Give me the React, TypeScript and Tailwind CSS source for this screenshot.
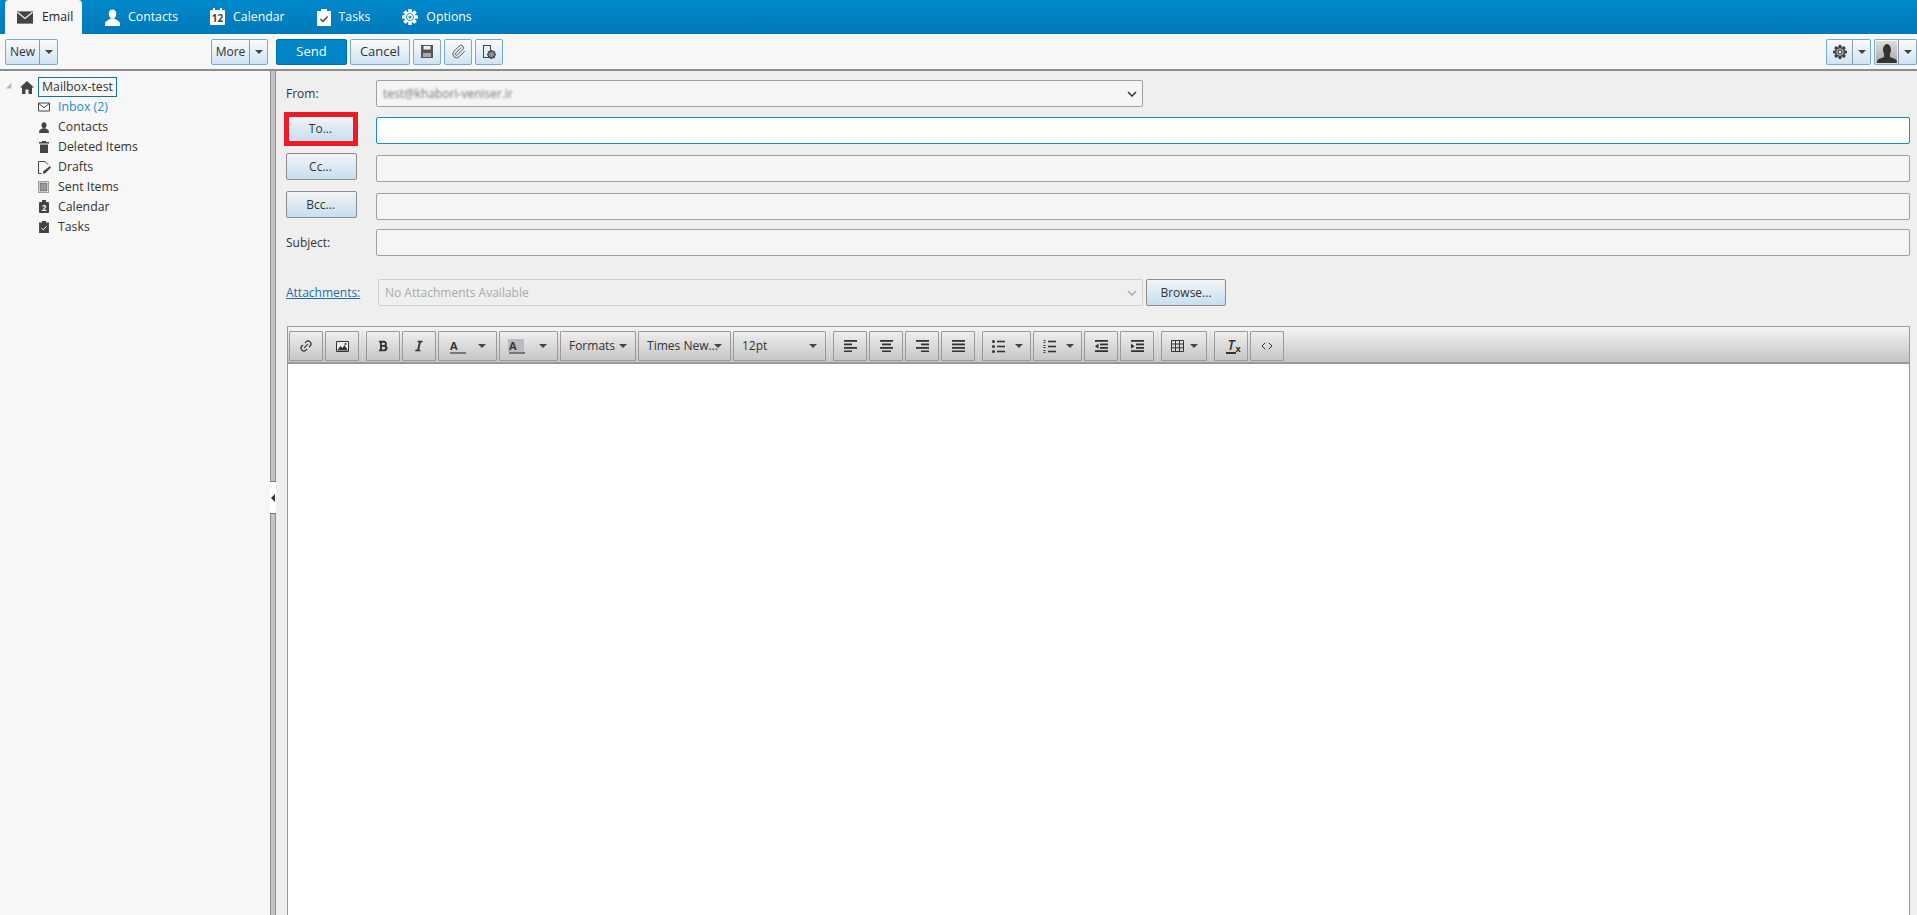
import React from 'react';
import { Code, Link2, Paperclip } from 'lucide-react';
import { FaBold, FaItalic } from 'react-icons/fa';

const Caret: React.FC<{ className?: string }> = ({ className = 'border-t-[#444]' }) => (
  <span className={`inline-block h-0 w-0 border-x-[4px] border-t-[4px] border-x-transparent ${className}`} />
);

const GearIcon: React.FC<{ className?: string }> = ({ className }) => (
  <svg viewBox="0 0 16 16" className={className}>
    {[0, 45, 90, 135].map((a) => (
      <rect key={a} x="6.2" y="0" width="3.6" height="16" rx=".6" fill="currentColor" transform={`rotate(${a} 8 8)`} />
    ))}
    <circle cx="8" cy="8" r="5.6" fill="currentColor" />
    <circle cx="8" cy="8" r="3.6" fill="none" stroke="#fff" strokeWidth="1" opacity=".85" />
    <circle cx="8" cy="8" r="1.6" fill="#fff" opacity=".85" />
  </svg>
);

const PersonIcon: React.FC<{ className?: string }> = ({ className }) => (
  <svg viewBox="0 0 15 17" className={className}>
    <ellipse cx="7.5" cy="5" rx="3.8" ry="4.6" fill="currentColor" />
    <path d="M5.5 9.5h4L14 12.5c.7.5 1 1 1 2V17H0v-2.5c0-1 .3-1.5 1-2z" fill="currentColor" />
  </svg>
);

const EnvelopeIcon: React.FC<{ className?: string }> = ({ className }) => (
  <svg viewBox="0 0 17 13" className={className}>
    <path d="M0 0h17v13H0z" fill="currentColor" />
    <path d="M.5 1l8 6.5 8-6.5" fill="none" stroke="#f7f7f7" strokeWidth="1.3" />
  </svg>
);

const CalendarIcon: React.FC<{ label: string; className: string; text: string }> = ({ label, className, text }) => (
  <span className={`relative flex flex-col items-center justify-end rounded-[1px] ${className}`}>
    <span className="absolute -top-[2px] left-[3px] h-[4px] w-[2px] bg-inherit" />
    <span className="absolute -top-[2px] right-[3px] h-[4px] w-[2px] bg-inherit" />
    <span className={`font-bold ${text}`}>{label}</span>
  </span>
);

const ClipboardIcon: React.FC<{ className?: string; stroke: string }> = ({ className, stroke }) => (
  <svg viewBox="0 0 14 17" className={className}>
    <path d="M0 2h4V0h6v2h4v15H0z" fill="currentColor" />
    <path d="M3.5 10l2.5 2.5 4.5-5" fill="none" stroke={stroke} strokeWidth="1.4" />
  </svg>
);

const NavTab: React.FC<{ icon: React.ReactNode; label: string; active?: boolean }> = ({ icon, label, active }) =>
  active ? (
    <div className="ml-[5px] flex h-[34px] w-[77px] items-center gap-[9px] rounded-t-[4px] bg-[#f7f7f7] pl-[12px] text-[#222]">
      {icon}
      <span>{label}</span>
    </div>
  ) : (
    <div className="flex h-[34px] items-center gap-[8px] text-white">
      {icon}
      <span>{label}</span>
    </div>
  );

const SplitButton: React.FC<{ label?: React.ReactNode; main: string; arrow: string }> = ({ label, main, arrow }) => (
  <div className="flex h-[26px] overflow-hidden rounded-[2px] border border-[#7aa9d4] bg-gradient-to-b from-[#fbfbfb] to-[#cfe3f3] text-[#333]">
    <div className={`flex items-center justify-center border-r border-[#8a9aa8] ${main}`}>{label}</div>
    <div className={`flex items-center justify-center ${arrow}`}>
      <Caret />
    </div>
  </div>
);

const IconButton: React.FC<{ children: React.ReactNode }> = ({ children }) => (
  <div className="flex h-[26px] w-[28px] items-center justify-center rounded-[2px] border border-[#7aa9d4] bg-gradient-to-b from-[#fbfbfb] to-[#cfe3f3] text-[#444]">
    {children}
  </div>
);

const AddressButton: React.FC<{ label: string; marked?: boolean }> = ({ label, marked }) => (
  <div className="relative mt-px flex h-[27px] w-[71px] items-center justify-center rounded-[2px] border border-[#8c8c8c] bg-gradient-to-b from-[#f3f3f3] to-[#c6dff1] pr-[2px] text-[#333]">
    {label}
    {marked && <span className="absolute -top-[4px] -bottom-[5px] -left-[3px] -right-[2px] border-[5px] border-[#ed1c24]" />}
  </div>
);

const AddressRow: React.FC<{ label: string; marked?: boolean; focused?: boolean; className: string }> = ({
  label,
  marked,
  focused,
  className,
}) => (
  <div className={`flex items-start ${className}`}>
    <div className="w-[90px]">
      <AddressButton label={label} marked={marked} />
    </div>
    <div
      className={
        focused
          ? 'mt-[3px] h-[27px] flex-1 rounded-[2px] border border-[#1a8fc4] bg-white'
          : 'mt-[3px] h-[27px] flex-1 rounded-[2px] border border-[#a0a0a0] bg-[#f5f5f5]'
      }
    />
  </div>
);

const EdBtn: React.FC<{ className?: string; children?: React.ReactNode }> = ({ className = 'w-[34px] justify-center', children }) => (
  <div className={`flex h-[30px] shrink-0 items-center rounded-[1px] border border-[#9a9a9a] text-[#333] ${className}`}>{children}</div>
);

const Sep = () => <div className="mx-px h-[30px] w-px bg-[#d8d8d8]" />;

const Lines: React.FC<{ kind: 'left' | 'center' | 'right' | 'justify' }> = ({ kind }) => {
  const rows = {
    left: [[0, 13], [0, 8], [0, 13], [0, 8]],
    center: [[0, 13], [2, 9], [0, 13], [2, 9]],
    right: [[0, 13], [5, 8], [0, 13], [5, 8]],
    justify: [[0, 13], [0, 13], [0, 13], [0, 13]],
  }[kind];
  return (
    <svg width="13" height="12" viewBox="0 0 13 12" className="text-[#333]">
      {rows.map(([x, w], i) => (
        <rect key={i} x={x} y={i * 3.5} width={w} height="1.8" fill="currentColor" />
      ))}
    </svg>
  );
};

const Indent: React.FC<{ out?: boolean }> = ({ out }) => (
  <svg width="13" height="12" viewBox="0 0 13 12" className="text-[#333]">
    <rect x="0" y="0" width="13" height="1.8" fill="currentColor" />
    <rect x="5" y="3.5" width="8" height="1.8" fill="currentColor" />
    <rect x="5" y="7" width="8" height="1.8" fill="currentColor" />
    <rect x="0" y="10.2" width="13" height="1.8" fill="currentColor" />
    <path d={out ? 'M0 6.2L3.5 3.6v5.2z' : 'M3.5 6.2L0 3.6v5.2z'} fill="currentColor" />
  </svg>
);

const BulletList = () => (
  <svg width="13" height="13" viewBox="0 0 13 13" className="text-[#333]">
    {[1.5, 6.5, 11.5].map((y) => (
      <g key={y}>
        <circle cx="1.5" cy={y} r="1.5" fill="currentColor" />
        <rect x="5" y={y - 0.8} width="8" height="1.6" fill="currentColor" />
      </g>
    ))}
  </svg>
);

const NumberList = () => (
  <svg width="13" height="13" viewBox="0 0 13 13" className="text-[#333]">
    {[1.5, 6.5, 11.5].map((y) => (
      <g key={y}>
        <rect x="0.5" y={y - 1.5} width="2" height="1" fill="currentColor" />
        <rect x="0.5" y={y + 0.5} width="2" height="1" fill="currentColor" />
        <rect x="5" y={y - 0.8} width="8" height="1.6" fill="currentColor" />
      </g>
    ))}
  </svg>
);

const TableIcon = () => (
  <svg width="13" height="12" viewBox="0 0 13 12" className="text-[#333]">
    <path d="M.5.5h12v11H.5zM4.5.5v11M8.5.5v11M.5 4h12M.5 7.8h12" fill="none" stroke="currentColor" />
  </svg>
);

const ImageIcon = () => (
  <svg width="13" height="11" viewBox="0 0 13 11" className="text-[#333]">
    <path d="M.5.5h12v10H.5z" fill="#eee" stroke="currentColor" />
    <path d="M1 9.5l3.5-4.5 2 2 2-3 3.500 5.500z" fill="currentColor" />
    <circle cx="9.5" cy="3" r="1" fill="currentColor" />
  </svg>
);

const ColorIcon: React.FC<{ bg?: boolean }> = ({ bg }) => (
  <span className="flex w-[16px] flex-col items-start">
    <span className={bg ? 'w-[16px] bg-[#bbb] pl-px text-[11px] leading-[13px] font-bold' : 'pl-px text-[11px] leading-[13px] font-bold'}>A</span>
    <span className="ml-px h-[2px] w-[16px] bg-[#777]" />
  </span>
);

const folders: { label: string; icon: React.ReactNode; className?: string }[] = [
  {
    label: 'Inbox (2)',
    icon: (
      <svg viewBox="0 0 12 9" className="h-[10px] w-[12px]">
        <path d="M.5.5h11v8H.5zM.5.8L6 5.2 11.5.8" fill="none" stroke="#444" />
      </svg>
    ),
    className: 'text-[#1a8ccb]',
  },
  { label: 'Contacts', icon: <PersonIcon className="ml-px h-[11px] w-[10px]" /> },
  {
    label: 'Deleted Items',
    icon: (
      <svg viewBox="0 0 10 12" className="ml-px h-[12px] w-[10px]">
        <path d="M3 0h4v1h3v1.5H0V1h3zM1 3.5h8V12H1z" fill="currentColor" />
      </svg>
    ),
  },
  {
    label: 'Drafts',
    icon: (
      <svg viewBox="0 0 13 13" className="h-[13px] w-[13px]">
        <path d="M7 .5H.5v12h3M7 .5l3 3" fill="none" stroke="currentColor" />
        <path d="M12 5l1 1.5-6 6H5v-2z" fill="currentColor" />
      </svg>
    ),
  },
  {
    label: 'Sent Items',
    icon: (
      <svg viewBox="0 0 11 12" className="h-[12px] w-[11px]">
        <rect x=".5" y=".5" width="10" height="11" fill="none" stroke="#444" strokeDasharray="1 1" />
        <rect x="2" y="2" width="7" height="8" fill="#999" stroke="#444" strokeWidth=".5" />
      </svg>
    ),
  },
  {
    label: 'Calendar',
    icon: <CalendarIcon label="2" className="mt-[1px] ml-px h-[11px] w-[10px] bg-[#444]" text="text-[8px] leading-[10px] text-white" />,
  },
  { label: 'Tasks', icon: <ClipboardIcon className="ml-px h-[12px] w-[10px]" stroke="#fff" /> },
];

export default function App() {
  return (
    <div className="flex h-screen flex-col overflow-hidden bg-[#efefef] font-['Open_Sans',sans-serif] text-[12px] text-[#333]">
      {/* Top nav */}
      <div className="flex h-[34px] shrink-0 items-center bg-gradient-to-b from-[#0088cc] to-[#0079b8] text-[12.3px]">
        <NavTab active label="Email" icon={<EnvelopeIcon className="h-[13px] w-[16px] text-[#444]" />} />
        <div className="ml-[23px] flex items-center gap-[32px]">
          <NavTab label="Contacts" icon={<PersonIcon className="h-[17px] w-[15px]" />} />
          <NavTab
            label="Calendar"
            icon={<CalendarIcon label="12" className="h-[15px] w-[15px] bg-white" text="text-[10px] leading-[13px] text-[#444]" />}
          />
          <NavTab label="Tasks" icon={<ClipboardIcon className="h-[17px] w-[14px]" stroke="#444" />} />
          <NavTab label="Options" icon={<GearIcon className="h-[16px] w-[16px] [&_circle:nth-of-type(2)]:stroke-[#0085c4] [&_circle:nth-of-type(3)]:fill-[#0085c4]" />} />
        </div>
      </div>

      {/* Action toolbar */}
      <div className="flex h-[37px] shrink-0 items-center border-b-2 border-[#8c8c8c] bg-[#f7f7f7] pr-0 pl-[5px]">
        <SplitButton label="New" main="w-[34px]" arrow="w-[17px]" />
        <div className="ml-[153px]">
          <SplitButton label="More" main="w-[38px]" arrow="w-[17px]" />
        </div>
        <div className="ml-[8px] flex h-[26px] w-[71px] items-center justify-center rounded-[2px] border border-[#006fa8] bg-[#0085c8] text-[13px] text-white">
          Send
        </div>
        <div className="ml-[3px] flex h-[26px] w-[60px] items-center justify-center rounded-[2px] border border-[#7aa9d4] bg-gradient-to-b from-[#fbfbfb] to-[#cfe3f3] text-[13px]">
          Cancel
        </div>
        <div className="ml-[3px] flex gap-[3px]">
          <IconButton>
            <svg viewBox="0 0 12 13" className="h-[13px] w-[12px]">
              <path d="M0 0h12v13H0z" fill="#555" />
              <path d="M2.5 1h7v3.5h-7z" fill="#f0f0f0" />
              <path d="M2 8h8v4H2z" fill="#aaa" />
            </svg>
          </IconButton>
          <IconButton>
            <Paperclip className="h-[15px] w-[15px]" strokeWidth={1.4} />
          </IconButton>
          <IconButton>
            <span className="relative h-[14px] w-[13px]">
              <span className="absolute top-0 left-0 h-[13px] w-[8px] border border-[#444]" />
              <GearIcon className="absolute right-0 bottom-0 h-[9px] w-[9px]" />
            </span>
          </IconButton>
        </div>
        <div className="ml-auto flex gap-[3px]">
          <SplitButton label={<GearIcon className="h-[14px] w-[14px] text-[#444]" />} main="w-[26px]" arrow="w-[17px]" />
          <SplitButton
            main="w-[24px] !justify-start"
            arrow="w-[17px]"
            label={
              <span className="ml-[1px] flex h-[22px] w-[21px] items-end justify-center overflow-hidden bg-gradient-to-b from-[#ddd] to-[#aaa]">
                <svg viewBox="0 0 20 20" className="h-[20px] w-[20px] text-[#333]">
                  <ellipse cx="10" cy="7" rx="4" ry="6" fill="currentColor" />
                  <path d="M7 12h6v2l5 2c1 .5 2 1 2 4H0c0-3 1-3.5 2-4l5-2z" fill="currentColor" />
                </svg>
              </span>
            }
          />
        </div>
      </div>

      <div className="flex min-h-0 flex-1">
        {/* Folder tree */}
        <div className="w-[270px] shrink-0 bg-[#f7f7f7] pt-[6px] pl-[6px] text-[12.3px]">
          <div className="flex h-[20px] items-center">
            <Caret className="mr-[6px] -rotate-45 border-t-[#bbb]" />
            <svg viewBox="0 0 14 13" className="mr-[4px] h-[13px] w-[14px] text-[#444]">
              <path d="M7 0l7 6.5h-2V13H8.5V8.5h-3V13H2V6.5H0z" fill="currentColor" />
            </svg>
            <span className="flex h-[20px] items-center border border-[#1a6f9c] px-[3px]">Mailbox-test</span>
          </div>
          <div>
            {folders.map((f) => (
              <div key={f.label} className="flex h-[20px] items-center">
                <span className="ml-[31px] flex w-[21px] justify-start pl-[1px] text-[#444]">{f.icon}</span>
                <span className={f.className}>{f.label}</span>
              </div>
            ))}
          </div>
        </div>

        {/* Splitter */}
        <div className="relative w-[6px] shrink-0 border-x border-[#8c8c8c] bg-[#c4c4c4]">
          <div className="absolute top-[410px] -left-px flex h-[33px] w-[6px] items-center justify-center border-y border-[#777] bg-white">
            <span className="h-0 w-0 border-y-[4px] border-r-[4px] border-y-transparent border-r-[#333]" />
          </div>
        </div>

        {/* Compose form */}
        <div className="flex min-w-0 flex-1 flex-col pt-[9px] pr-[7px] pl-[10px]">
          <div className="flex h-[27px] items-center">
            <div className="w-[90px]">From:</div>
            <div className="flex h-[27px] w-[767px] items-center justify-between rounded-[2px] border border-[#a0a0a0] bg-[#f5f5f5] pr-[5px] pl-[6px]">
              <span className="text-[#777] blur-[1px]">test@khabori-veniser.ir</span>
              <svg width="10" height="6" viewBox="0 0 10 6">
                <path d="M1 1l4 4 4-4" fill="none" stroke="#333" strokeWidth="1.5" />
              </svg>
            </div>
          </div>
          <AddressRow label="To..." marked focused className="mt-[7px]" />
          <AddressRow label="Cc..." className="mt-[8px]" />
          <AddressRow label="Bcc..." className="mt-[8px]" />
          <div className="mt-[9px] flex h-[27px] items-center">
            <div className="w-[90px]">Subject:</div>
            <div className="h-[27px] flex-1 rounded-[2px] border border-[#a0a0a0] bg-[#f5f5f5]" />
          </div>

          <div className="mt-[23px] flex h-[27px] items-center">
            <div className="w-[92px] text-[#1a6fa8] underline">Attachments:</div>
            <div className="flex h-[27px] w-[765px] items-center justify-between rounded-[2px] border border-[#d0d0d0] bg-[#efefef] pr-[5px] pl-[6px] text-[#aaa]">
              No Attachments Available
              <svg width="10" height="6" viewBox="0 0 10 6">
                <path d="M1 1l4 4 4-4" fill="none" stroke="#aaa" strokeWidth="1.5" />
              </svg>
            </div>
            <div className="ml-[3px] flex h-[27px] w-[80px] items-center justify-center rounded-[2px] border border-[#8c8c8c] bg-gradient-to-b from-[#f3f3f3] to-[#c6dff1]">
              Browse...
            </div>
          </div>

          {/* Rich text editor */}
          <div className="mt-[20px] ml-px flex min-h-0 flex-1 flex-col border border-b-0 border-[#999] bg-white">
            <div className="flex h-[37px] shrink-0 items-center gap-[2px] border-b-2 border-[#9a9a9a] bg-gradient-to-b from-[#f5f5f5] to-[#c4c4c4] pt-[3px] pl-px">
              <EdBtn>
                <Link2 className="h-[14px] w-[14px] -rotate-45" />
              </EdBtn>
              <EdBtn>
                <ImageIcon />
              </EdBtn>
              <Sep />
              <EdBtn>
                <FaBold className="h-[12px] w-[10px]" />
              </EdBtn>
              <EdBtn>
                <FaItalic className="h-[12px] w-[10px]" />
              </EdBtn>
              <EdBtn className="w-[59px] justify-between pr-[10px] pl-[10px]">
                <ColorIcon />
                <Caret />
              </EdBtn>
              <EdBtn className="w-[59px] justify-between pr-[10px] pl-[8px]">
                <ColorIcon bg />
                <Caret />
              </EdBtn>
              <EdBtn className="w-[76px] justify-center gap-[4px]">
                Formats
                <Caret />
              </EdBtn>
              <EdBtn className="w-[93px] justify-center gap-[0px]">
                Times New...
                <Caret className="-ml-[4px] border-t-[#444]" />
              </EdBtn>
              <EdBtn className="w-[93px] justify-between pr-[8px] pl-[8px]">
                12pt
                <Caret />
              </EdBtn>
              <Sep />
              <EdBtn>
                <Lines kind="left" />
              </EdBtn>
              <EdBtn>
                <Lines kind="center" />
              </EdBtn>
              <EdBtn>
                <Lines kind="right" />
              </EdBtn>
              <EdBtn>
                <Lines kind="justify" />
              </EdBtn>
              <Sep />
              <EdBtn className="w-[49px] justify-between pr-[7px] pl-[9px]">
                <BulletList />
                <Caret />
              </EdBtn>
              <EdBtn className="w-[49px] justify-between pr-[7px] pl-[9px]">
                <NumberList />
                <Caret />
              </EdBtn>
              <EdBtn>
                <Indent out />
              </EdBtn>
              <EdBtn>
                <Indent />
              </EdBtn>
              <Sep />
              <EdBtn className="w-[46px] justify-between pr-[8px] pl-[9px]">
                <TableIcon />
                <Caret />
              </EdBtn>
              <Sep />
              <EdBtn>
                <span className="relative border-b-2 border-[#333] px-px text-[14px] leading-[14px] font-semibold italic">
                  T<span className="absolute -right-[5px] -bottom-px text-[9px] leading-[9px] font-bold not-italic">x</span>
                </span>
              </EdBtn>
              <EdBtn>
                <Code className="h-[12px] w-[12px]" />
              </EdBtn>
            </div>
            <div className="flex-1 bg-white" />
          </div>
        </div>
      </div>
    </div>
  );
}
